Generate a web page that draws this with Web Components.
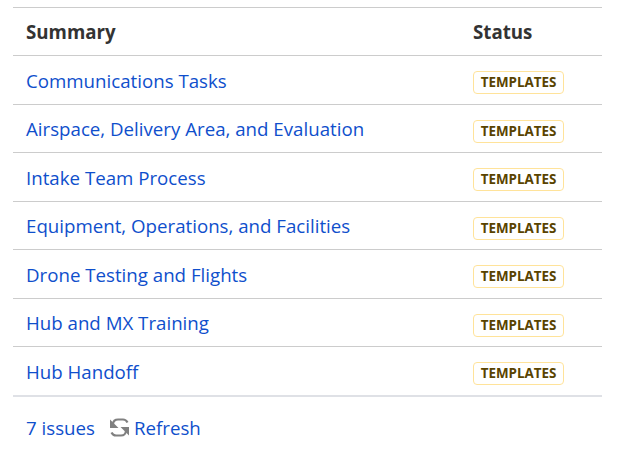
<!DOCTYPE html>
<html>
<head>
<meta charset="utf-8">
<title>Issues</title>
<style>
    html, body { margin: 0; padding: 0; background: #fff; }
    body { font-family: "Open Sans", "Noto Sans", sans-serif; }
</style>
</head>
<body>
<issue-table>
    <issue-row href="#">Communications Tasks</issue-row>
    <issue-row href="#">Airspace, Delivery Area, and Evaluation</issue-row>
    <issue-row href="#">Intake Team Process</issue-row>
    <issue-row href="#">Equipment, Operations, and Facilities</issue-row>
    <issue-row href="#">Drone Testing and Flights</issue-row>
    <issue-row href="#">Hub and MX Training</issue-row>
    <issue-row href="#">Hub Handoff</issue-row>
    <issue-footer count="7 issues"></issue-footer>
</issue-table>

<script>
class IssueTable extends HTMLElement {
    constructor() {
        super();
        this.attachShadow({ mode: 'open' }).innerHTML = `
            <style>
                :host {
                    display: block;
                    width: 589px;
                    margin: 7px 0 0 13px;
                    font-size: 18.7px;
                }
                .head {
                    display: grid;
                    grid-template-columns: 447px 1fr;
                    height: 47px;
                    align-items: center;
                    padding-left: 13px;
                    border-top: 1px solid #ccc;
                    border-bottom: 1px solid #ccc;
                    font-weight: 700;
                    color: #333;
                }
            </style>
            <div class="head"><span>Summary</span><span>Status</span></div>
            <slot></slot>
        `;
    }
}

class IssueRow extends HTMLElement {
    constructor() {
        super();
        this.attachShadow({ mode: 'open' }).innerHTML = `
            <style>
                :host {
                    display: grid;
                    grid-template-columns: 447px 1fr;
                    height: 47.5px;
                    align-items: center;
                    padding-left: 13px;
                    border-bottom: 1px solid #ccc;
                }
                a { color: #0f4fcc; text-decoration: none; padding-top: 1px; }
                status-lozenge { margin-top: 5.9px; }
            </style>
            <a><slot></slot></a>
            <status-lozenge>TEMPLATES</status-lozenge>
        `;
    }
}

class StatusLozenge extends HTMLElement {
    constructor() {
        super();
        this.attachShadow({ mode: 'open' }).innerHTML = `
            <style>
                :host {
                    display: block;
                    box-sizing: border-box;
                    width: 91px;
                    height: 23px;
                    border: 1px solid #ffe39a;
                    border-radius: 4px;
                    background: #fff;
                    color: #594300;
                    font-size: 13.4px;
                    font-weight: 700;
                    line-height: 21px;
                    text-align: center;
                }
            </style>
            <slot></slot>
        `;
    }
}

class IssueFooter extends HTMLElement {
    constructor() {
        super();
        this.attachShadow({ mode: 'open' }).innerHTML = `
            <style>
                :host {
                    display: flex;
                    align-items: center;
                    height: 61px;
                    padding-left: 13px;
                    color: #0f4fcc;
                    border-top: 2px solid #dfe1e6;
                    margin-top: -1px;
                }
                svg { margin: 0 4px 0 14px; filter: blur(0.4px); }
            </style>
            <span>${this.getAttribute('count')}</span>
            <svg width="21" height="21" viewBox="0 0 21 21">
                <g fill="#808080">
                    <path d="M1 2.5V11H9.5Z"/>
                    <path d="M20 18.5V10H11.5Z"/>
                </g>
                <g fill="none" stroke="#808080" stroke-width="2.2">
                    <path d="M4 7Q4.5 2.5 9 2.5H14Q17 2.5 18.5 5.5"/>
                    <path d="M17 14Q16.5 18.5 12 18.5H7Q4 18.5 2.5 15.5"/>
                </g>
            </svg>
            <span>Refresh</span>
        `;
    }
}

customElements.define('issue-table', IssueTable);
customElements.define('issue-row', IssueRow);
customElements.define('status-lozenge', StatusLozenge);
customElements.define('issue-footer', IssueFooter);
</script>
</body>
</html>
